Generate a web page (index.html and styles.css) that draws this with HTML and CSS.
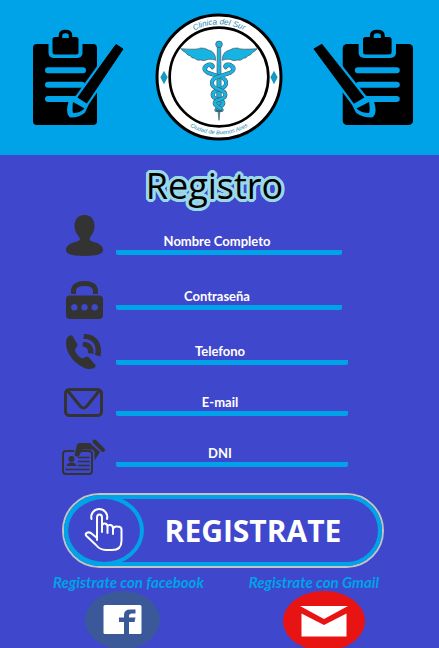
FILE: index.html
```html
<!DOCTYPE html>
<html lang="es">
<head>
<meta charset="utf-8">
<meta name="viewport" content="width=device-width, initial-scale=1">
<title>Registro - Clinica del Sur</title>
<link rel="stylesheet" href="styles.css">
</head>
<body>
<svg class="sprite" aria-hidden="true">
  <symbol id="clipboard" viewBox="33 29 92 97" preserveAspectRatio="none">
    <rect x="33" y="44" width="64" height="81" rx="4" fill="#000"/>
    <rect x="48.500" y="36" width="34" height="22" rx="5" fill="#00a2e8"/>
    <rect x="52.500" y="37" width="26" height="17.500" rx="2.500" fill="#000"/>
    <path d="M60.500 38V35.500Q60.500 31.500 65.500 31.500Q70.500 31.500 70.500 35.500V38" fill="#00a2e8" stroke="#000" stroke-width="3.500"/>
    <path d="M48 70.300H83M48 84.700H82M48 99H75" stroke="#00a2e8" stroke-width="6" stroke-linecap="round"/>
    <path d="M116 44L123.700 49L86.700 103L83 111Q78 115 71 115Q68 112 71 102L78 97Z" fill="#00a2e8" stroke="#00a2e8" stroke-width="5" stroke-linejoin="round"/>
    <path d="M116 44.500L123 49L86.700 103L78 97.300Z" fill="#000" stroke="#000" stroke-linejoin="round"/>
    <path d="M73 102L84.500 108.500Q80 113 73 113Q72 109 73 102Z" fill="#000"/>
  </symbol>
</svg>

<header class="banner">
  <svg class="clip clip-left" aria-hidden="true"><use href="#clipboard"/></svg>
  <svg class="logo" viewBox="18 24 384 384" role="img" aria-label="Clinica del Sur">
    <defs>
      <path id="arc-top" d="M52 216A158 158 0 0 1 368 216"/>
      <path id="arc-bottom" d="M38 216A172 172 0 0 0 382 216"/>
      <path id="snake-a" d="M170 188C176 172 196 180 190 186C176 172 152 190 176 203C200 214 236 214 231 238C224 258 189 251 191 271C194 288 225 280 223 295C221 307 204 305 202 315"/>
      <path id="snake-b" d="M250 188C244 172 224 180 230 186C244 172 268 190 244 203C220 214 184 214 189 238C196 258 231 251 229 271C226 288 195 280 197 295C199 307 216 305 218 315"/>
    </defs>
    <circle cx="210" cy="216" r="186" fill="#fff" stroke="#000" stroke-width="9"/>
    <circle cx="210" cy="216" r="148" fill="#fff" stroke="#000" stroke-width="8"/>
    <g fill="#1398c4">
      <path d="M45 197L56 217L45 238L34 217Z"/>
      <path d="M375 197L386 217L375 238L364 217Z"/>
    </g>
    <g class="logo-text">
      <text class="logo-name"><textPath href="#arc-top" startOffset="50%">Clinica del Sur</textPath></text>
      <text class="logo-city"><textPath href="#arc-bottom" startOffset="50%">Ciudad de Buenos Aires</textPath></text>
    </g>
    <g fill="#16b3e3" stroke="#4b5357" stroke-width="2" stroke-linejoin="round">
      <path d="M200 166Q201 140 178 135Q168 128 154 129Q148 135 95 131Q102 139 110 143Q114 151 123 152Q127 160 137 160Q144 168 155 165Q166 170 177 163Q190 161 200 166Z"/>
      <path d="M220 166Q219 140 242 135Q252 128 266 129Q272 135 325 131Q318 139 310 143Q306 151 297 152Q293 160 283 160Q276 168 265 165Q254 170 243 163Q230 161 220 166Z"/>
      <path d="M205 124H215L217 280L210 346L203 280Z"/>
      <circle cx="210" cy="118" r="10"/>
    </g>
    <g fill="none" stroke-linecap="round">
      <use href="#snake-a" stroke="#4b5357" stroke-width="12"/>
      <use href="#snake-a" stroke="#16b3e3" stroke-width="9"/>
      <use href="#snake-b" stroke="#4b5357" stroke-width="12"/>
      <use href="#snake-b" stroke="#16b3e3" stroke-width="9"/>
      <path d="M202 315L210 320L218 315" stroke="#4b5357" stroke-width="4"/>
    </g>
  </svg>
  <svg class="clip clip-right" aria-hidden="true"><use href="#clipboard"/></svg>
</header>

<main>
  <h1 class="title">Registro</h1>
  <form class="form">
    <div class="row">
      <svg class="icon" viewBox="62 215 44 50" aria-hidden="true"><path d="M84.500 215C78 215 74.500 219.500 74.500 226C74.500 232 78 235 80 238.500C80 241 77 241.500 73.500 242.500C69 244 66 246.500 66 250C66 254 72 256 84.500 256C97 256 103 254 103 250C103 246.500 100 244 95.500 242.500C92 241.500 89.500 241 89.500 238.500C91.500 235 94.500 232 94.500 226C94.500 219.500 91 215 84.500 215Z"/></svg>
      <div class="field field-short">
        <label for="nombre">Nombre Completo</label>
        <input id="nombre" type="text">
      </div>
    </div>
    <div class="row">
      <svg class="icon" viewBox="62 270 44 50" aria-hidden="true">
        <path class="arch" d="M73.500 294V291C73.500 286 78 283.500 84.500 283.500C91 283.500 95.500 286 95.500 291V294"/>
        <path fill-rule="evenodd" d="M70 295.500H99Q103 295.500 103 299.500V315Q103 319 99 319H70Q66 319 66 315V299.500Q66 295.500 70 295.500ZM74.300 304a3.300 3.300 0 1 0 .01 0ZM84.500 304a3.300 3.300 0 1 0 .01 0ZM94.700 304a3.300 3.300 0 1 0 .01 0Z"/>
      </svg>
      <div class="field field-short">
        <label for="clave">Contraseña</label>
        <input id="clave" type="password">
      </div>
    </div>
    <div class="row">
      <svg class="icon" viewBox="62 325 44 50" aria-hidden="true">
        <path d="M70 335.500Q66 337 66 343Q66 351 72 358.500Q79 367 88 369Q93 369.500 95.500 367Q96 366 95 364.500L88.500 357Q87 356 85.500 357L82.500 358.500Q77 356.500 74.800 350L77 346.500Q78 345 77 343.500L72.500 336Q71.500 335 70 335.500Z"/>
        <path d="M84 334Q94 333.500 99 342Q102 348 100.500 356.500L95 355Q96.500 348 94 344Q90.500 338.500 83.500 339Z"/>
        <path d="M83 342Q89 341.500 92 346Q94 349.500 93.500 354L88 353Q88.500 350 87 348.500Q85.500 346.500 82.500 346.500Z"/>
      </svg>
      <div class="field">
        <label for="telefono">Telefono</label>
        <input id="telefono" type="tel">
      </div>
    </div>
    <div class="row row-tight">
      <svg class="icon" viewBox="62 376 44 50" aria-hidden="true">
        <rect class="hollow" x="65.500" y="389.500" width="36" height="26" rx="4" stroke-width="3"/>
        <path class="hollow" d="M67.500 390.500L80.500 406.500Q83.500 409.500 86.500 406.500L99.500 390.500" stroke-width="3"/>
      </svg>
      <div class="field">
        <label for="email">E-mail</label>
        <input id="email" type="email">
      </div>
    </div>
    <div class="row row-tight">
      <svg class="icon" viewBox="62 427 44 50" aria-hidden="true">
        <path class="hollow" d="M73.500 451H66Q63 451 63 454V471Q63 474 66 474H89Q92 474 92 471V454Q92 451 89 451H82" stroke-width="2"/>
        <circle cx="71.500" cy="459" r="3"/>
        <path d="M66.500 466Q67 462.500 71.500 462.500Q76 462.500 76.500 466Z"/>
        <path class="hollow" d="M78.500 457.500H89M78.500 461.500H89M78.500 465.500H89M66 469.500H89" stroke-width="1.500"/>
        <path d="M77 444.500Q78 443 80 443H90L100 452L94.500 460.500V453Q94.500 449.500 91 449.500H82.500L79 456Q77 457.500 74.500 455.500Z"/>
        <path class="hollow" d="M94.500 441.500L103 450" stroke-width="4"/>
      </svg>
      <div class="field">
        <label for="dni">DNI</label>
        <input id="dni" type="text">
      </div>
    </div>

    <button class="submit" type="submit">
      <span class="submit-ring">
        <span class="submit-icon">
          <svg class="hand" viewBox="84 508 42 46" aria-hidden="true">
            <path d="M92.500 519A8 8 0 1 1 108 519M98 540V517.500Q98 514.500 100.500 514.500Q103 514.500 103 517.500V532M103 526Q103.500 523 106 523.500Q108.500 524 108.500 527V533M108.500 527Q109 524.500 111.500 525Q114 525.500 114 528.500V534M114 529Q115 526 118 526.500Q122.500 526.500 122.500 529.500V541Q122.500 550 113 550H107Q101 550 97 545L87.500 536Q86 534.500 87.500 533Q90 531.500 92.500 533.500L98 538"/>
          </svg>
        </span>
        <span class="submit-text">REGISTRATE</span>
      </span>
    </button>
  </form>

  <nav class="social">
    <a class="social-link facebook" href="#facebook">
      <span>Registrate con facebook</span>
      <svg viewBox="84 591 75 57" aria-hidden="true">
        <ellipse cx="121.500" cy="620" rx="37.500" ry="29" fill="#3b5998"/>
        <rect x="102.500" y="605" width="38" height="29" rx="1.500" fill="#fff"/>
        <path d="M123 634V622H118V617.500H123V615Q123 609.500 129 609.500H134.500V613.500H131Q128 613.500 128 616V617.500H134.500L133.500 622H128V634Z" fill="#3b5998"/>
      </svg>
    </a>
    <a class="social-link gmail" href="#gmail">
      <span>Registrate con Gmail</span>
      <svg viewBox="283 591 82 57" aria-hidden="true">
        <ellipse cx="324" cy="621" rx="41" ry="30" fill="#e81313"/>
        <path d="M300 606H348L324 619ZM301.500 613.500L324 625L346.500 613.500V636.500H301.500Z" fill="#fff"/>
      </svg>
    </a>
  </nav>
</main>
</body>
</html>
```
FILE: styles.css
```css
* {
  box-sizing: border-box;
}

body {
  margin: 0;
  background: #3f48cc;
  color: #fff;
  font-family: Lato, "Liberation Sans", sans-serif;
}

.sprite {
  position: absolute;
  width: 0;
  height: 0;
}

.banner {
  display: flex;
  align-items: center;
  justify-content: space-between;
  padding: 13px 26px 14px 33px;
  background: #00a2e8;
}

.clip {
  width: 92px;
  height: 97px;
}

.clip-right {
  width: 101px;
  transform: scaleX(-1);
}

.logo {
  width: 128px;
  height: 128px;
}

.logo-text {
  fill: #1b86ae;
  font-family: "Liberation Sans", sans-serif;
  font-style: italic;
  text-anchor: middle;
}

.logo-name {
  font-size: 24px;
}

.logo-city {
  font-size: 17px;
}

.title,
.submit-text {
  font-family: "Open Sans", "Noto Sans", sans-serif;
}

.title {
  margin: 0;
  padding: 7px 10px 0 0;
  color: #000;
  font-size: 36px;
  font-weight: 500;
  line-height: 48px;
  text-align: center;
  text-shadow:
    3px 0 #99d9ea, -3px 0 #99d9ea, 0 3px #99d9ea, 0 -3px #99d9ea,
    2px 2px #99d9ea, -2px 2px #99d9ea, 2px -2px #99d9ea, -2px -2px #99d9ea,
    3px 1px #99d9ea, -3px 1px #99d9ea, 3px -1px #99d9ea, -3px -1px #99d9ea,
    1px 3px #99d9ea, -1px 3px #99d9ea, 1px -3px #99d9ea, -1px -3px #99d9ea;
}

.form {
  padding: 0 55px 0 62px;
}

.row {
  display: flex;
  align-items: flex-end;
  gap: 10px;
  height: 55px;
  padding-right: 36px;
}

.row-tight {
  height: 51px;
}

.icon {
  flex: none;
  width: 44px;
  height: 50px;
  fill: #333;
}

.hollow,
.arch {
  fill: none;
  stroke: #333;
  stroke-linejoin: round;
  stroke-linecap: round;
}

.arch {
  stroke-linecap: butt;
  stroke-width: 5px;
}

.field {
  flex: 1;
  display: grid;
  margin-bottom: 10px;
}

.field-short {
  margin-right: 6px;
}

.field label,
.field input {
  grid-area: 1 / 1;
}

.field label {
  padding-right: 24px;
  font-size: 13px;
  font-weight: 700;
  line-height: 20px;
  text-align: center;
}

.field input {
  width: 100%;
  height: 24px;
  border: 0;
  padding: 0;
  background: linear-gradient(#00a2e8, #00a2e8) bottom / 100% 5px no-repeat;
  border-radius: 2px;
  color: inherit;
  font: inherit;
}

.submit {
  display: block;
  width: 100%;
  height: 75px;
  margin-top: 16px;
  padding: 0;
  border: 2px solid #c3c3c3;
  border-radius: 38px;
  background: #3f48cc;
  color: inherit;
  font: inherit;
}

.submit-ring {
  display: flex;
  align-items: center;
  height: 71px;
  border: 4px solid #00a2e8;
  border-radius: 36px;
}

.submit-icon {
  display: flex;
  align-items: center;
  justify-content: center;
  flex: none;
  width: 80px;
  height: 71px;
  margin-left: -4px;
  border: 4px solid #00a2e8;
  border-radius: 50%;
}

.hand {
  width: 42px;
  height: 46px;
  fill: none;
  stroke: #fff;
  stroke-width: 2;
  stroke-linecap: round;
  stroke-linejoin: round;
}

.submit-text {
  flex: 1;
  padding-right: 16px;
  font-size: 30px;
  font-weight: 700;
}

.social {
  display: flex;
  justify-content: space-between;
  padding: 5px 60px 0 53px;
}

.social-link {
  display: flex;
  flex-direction: column;
  align-items: center;
  color: #00a2e8;
  font-size: 15px;
  font-style: italic;
  font-weight: 700;
  line-height: 18px;
  text-decoration: none;
}

.social svg {
  height: 57px;
}

.facebook svg {
  width: 75px;
  margin-right: 12px;
}

.gmail svg {
  width: 82px;
  margin-left: 20px;
}
```
